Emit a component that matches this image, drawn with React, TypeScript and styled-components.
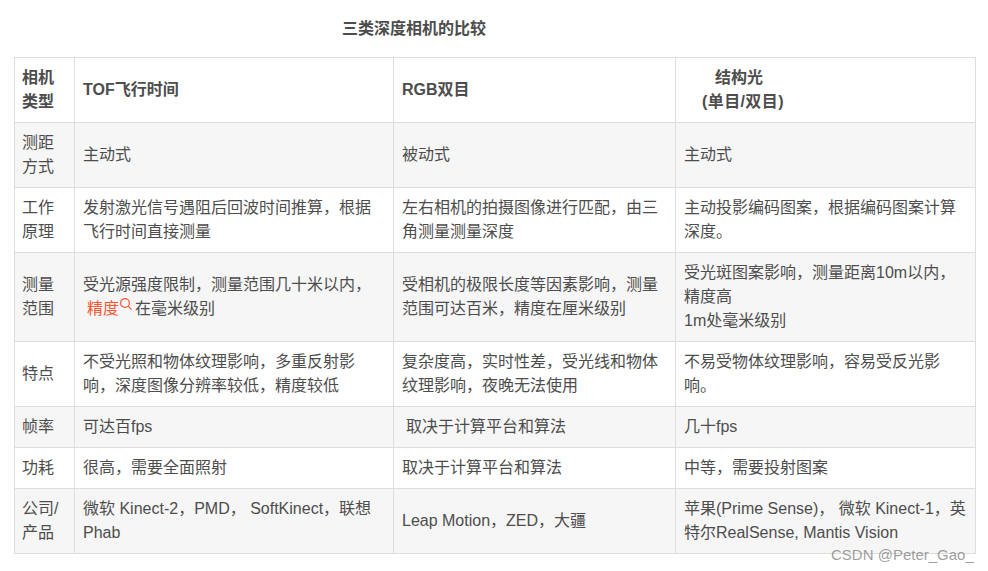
import React from "react";
import styled, { createGlobalStyle } from "styled-components";

const Global = createGlobalStyle`
  html, body { margin: 0; padding: 0; background: #fff; }
  body { width: 988px; height: 571px; overflow: hidden; }
`;

const Page = styled.div`
  position: relative;
  width: 988px;
  height: 571px;
  padding: 17px 13px 0 14px;
  box-sizing: border-box;
  font-family: "Liberation Sans", "Noto Sans CJK SC", sans-serif;
  font-size: 16px;
  line-height: 24px;
  color: #4d4d4d;
`;

const Title = styled.h1`
  margin: 0 0 16px;
  padding-left: 328px;
  font-size: 16px;
  line-height: 24px;
  font-weight: 700;
  color: #4d4d4d;
`;

const Table = styled.table`
  border-collapse: collapse;
  table-layout: fixed;
  width: 961px;
`;

const Row = styled.tr<{ $shaded?: boolean }>`
  background: ${(p) => (p.$shaded ? "#f6f6f6" : "#fff")};
`;

const Cell = styled.td<{ $head?: boolean }>`
  border: 1px solid #ddd;
  padding: 8px;
  vertical-align: middle;
  font-weight: ${(p) => (p.$head ? 700 : 400)};
  &:first-child {
    padding-left: 7px;
    padding-right: 9px;
  }
`;

const Indent = styled.span<{ $w: number }>`
  display: inline-block;
  width: ${(p) => p.$w}px;
`;

const WideLabel = styled.span`
  letter-spacing: 0.4px;
`;

const KeywordLink = styled.span`
  color: #fc5531;
  margin-left: 4px;
`;

const SearchIcon = styled.svg`
  display: inline-block;
  width: 14px;
  height: 14px;
  margin-right: 2px;
  vertical-align: 3px;
`;

const Watermark = styled.div`
  position: absolute;
  left: 831px;
  top: 545px;
  font-size: 15px;
  line-height: 20px;
  color: rgba(120, 120, 120, 0.72);
`;

type R = { cells: React.ReactNode[]; head?: boolean };

const rows: R[] = [
  {
    head: true,
    cells: [
      <>相机<br />类型</>,
      "TOF飞行时间",
      "RGB双目",
      <><Indent $w={31} />结构光<br /><Indent $w={18} /><WideLabel>(单目/双目)</WideLabel></>,
    ],
  },
  { cells: [<>测距<br />方式</>, "主动式", "被动式", "主动式"] },
  {
    cells: [
      <>工作<br />原理</>,
      "发射激光信号遇阻后回波时间推算，根据飞行时间直接测量",
      "左右相机的拍摄图像进行匹配，由三角测量测量深度",
      "主动投影编码图案，根据编码图案计算深度。",
    ],
  },
  {
    cells: [
      <>测量<br />范围</>,
      <>
        受光源强度限制，测量范围几十米以内，
        <br />
        <KeywordLink>精度</KeywordLink>
        <SearchIcon viewBox="0 0 14 14" fill="none" stroke="#fc5531" strokeWidth="1.2">
          <circle cx="6" cy="6" r="4.4" />
          <path d="M9.3 9.3 L12.6 12.6" />
        </SearchIcon>
        在毫米级别
      </>,
      "受相机的极限长度等因素影响，测量范围可达百米，精度在厘米级别",
      <>受光斑图案影响，测量距离10m以内，精度高<br />1m处毫米级别</>,
    ],
  },
  {
    cells: [
      "特点",
      "不受光照和物体纹理影响，多重反射影响，深度图像分辨率较低，精度较低",
      "复杂度高，实时性差，受光线和物体纹理影响，夜晚无法使用",
      "不易受物体纹理影响，容易受反光影响。",
    ],
  },
  { cells: ["帧率", "可达百fps", <><Indent $w={4} />取决于计算平台和算法</>, "几十fps"] },
  { cells: ["功耗", "很高，需要全面照射", "取决于计算平台和算法", "中等，需要投射图案"] },
  {
    cells: [
      <>公司/<br />产品</>,
      "微软 Kinect-2，PMD， SoftKinect，联想Phab",
      "Leap Motion，ZED，大疆",
      "苹果(Prime Sense)， 微软 Kinect-1，英特尔RealSense, Mantis Vision",
    ],
  },
];

export default function App() {
  return (
    <Page>
      <Global />
      <Title>三类深度相机的比较</Title>
      <Table>
        <colgroup>
          <col style={{ width: 60 }} />
          <col style={{ width: 319 }} />
          <col style={{ width: 282 }} />
          <col style={{ width: 300 }} />
        </colgroup>
        <tbody>
          {rows.map((r, i) => (
            <Row key={i} $shaded={i % 2 === 1}>
              {r.cells.map((c, j) => (
                <Cell key={j} $head={r.head}>{c}</Cell>
              ))}
            </Row>
          ))}
        </tbody>
      </Table>
      <Watermark>CSDN @Peter_Gao_</Watermark>
    </Page>
  );
}
